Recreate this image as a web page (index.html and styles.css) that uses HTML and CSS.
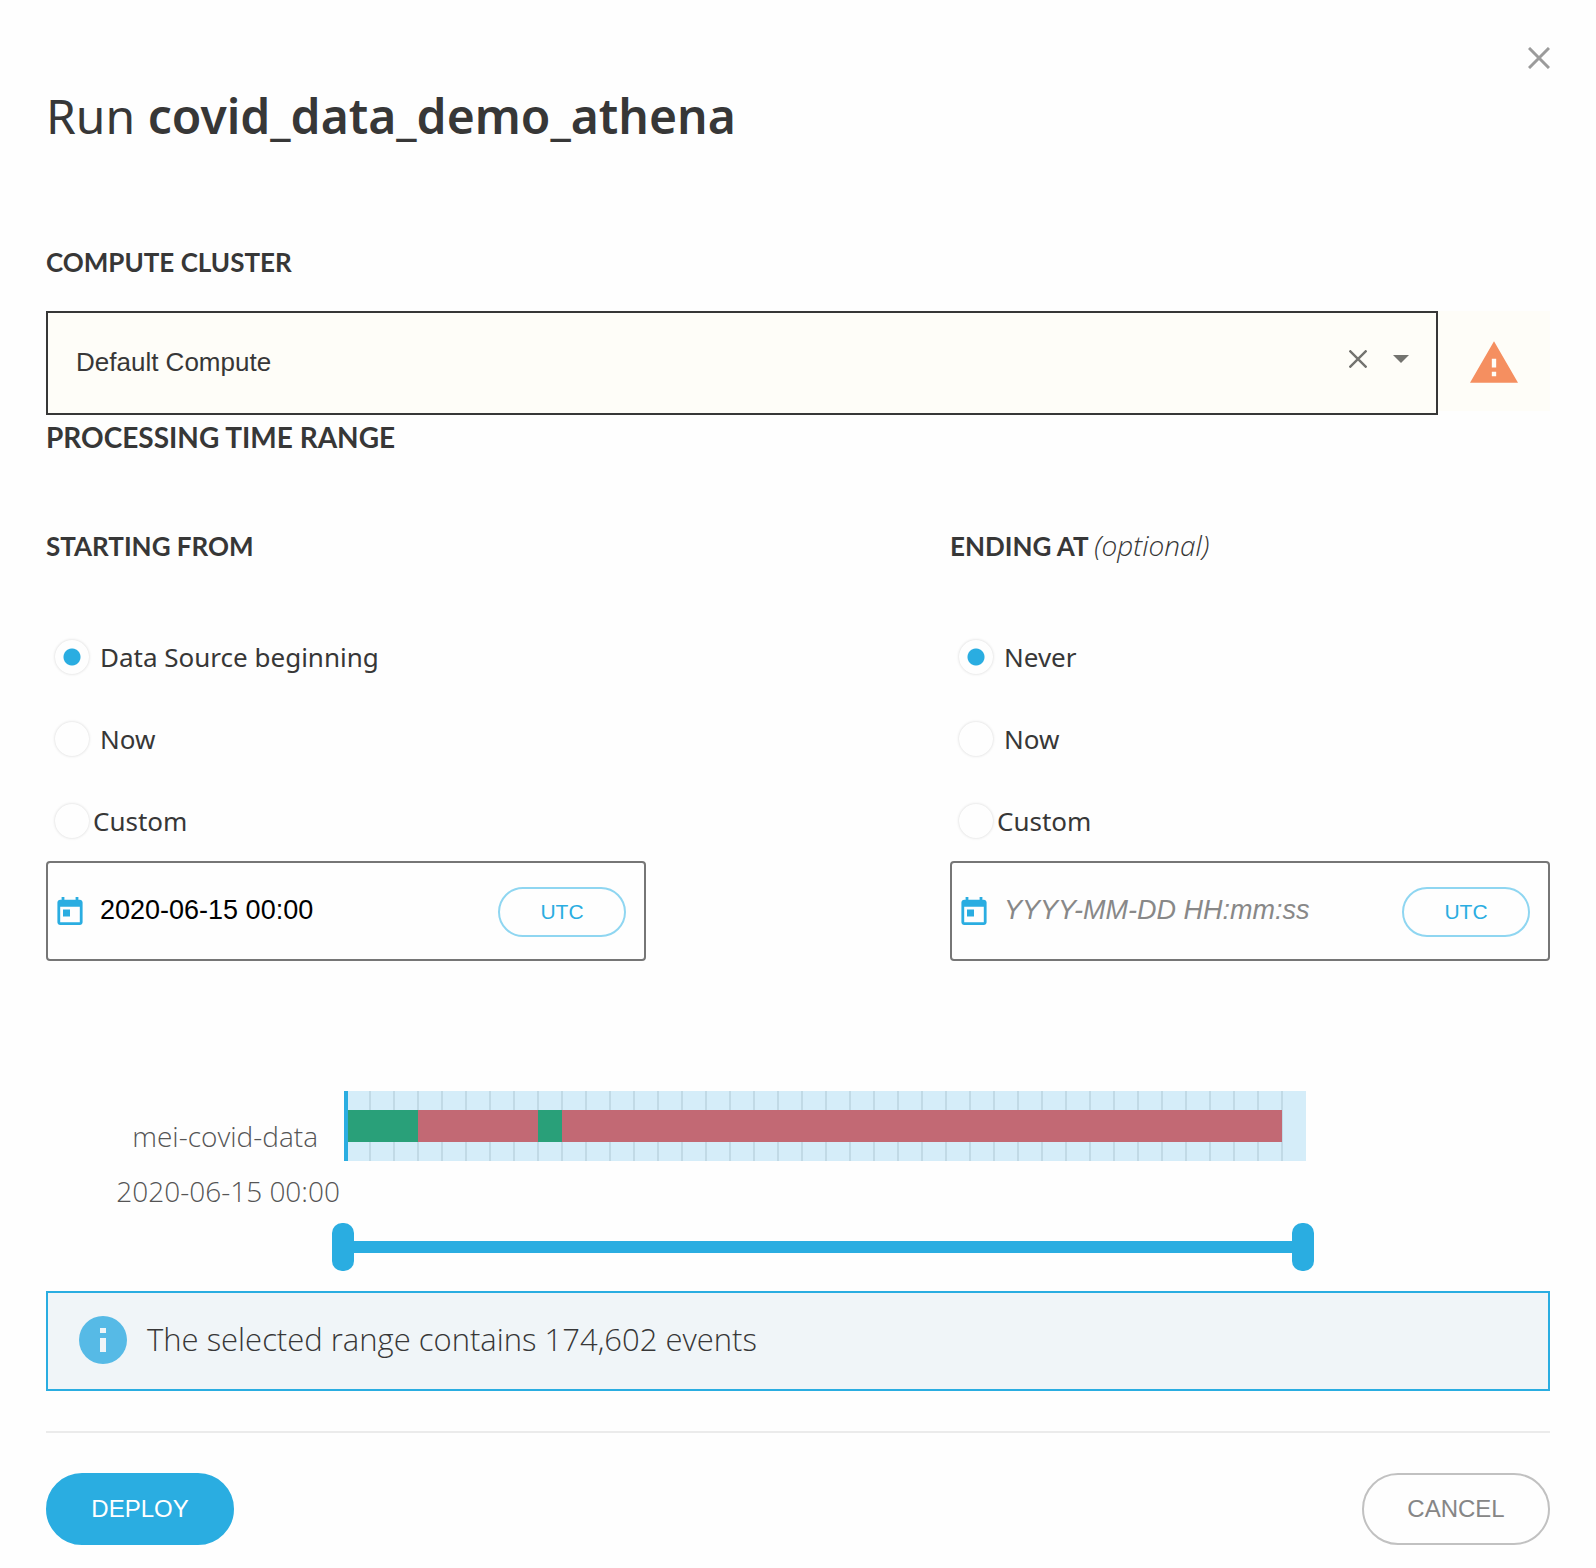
FILE: index.html
```html
<!DOCTYPE html>
<html lang="en">
<head>
<meta charset="utf-8">
<meta name="viewport" content="width=device-width, initial-scale=1">
<title>Run covid_data_demo_athena</title>
<link rel="stylesheet" href="styles.css">
</head>
<body>
<form class="dialog">
  <button class="icon-button close" type="button" aria-label="Close">
    <svg width="22" height="22" viewBox="0 0 22 22" fill="none" stroke="currentColor" stroke-width="3"><path d="M1 1l20 20M21 1L1 21"/></svg>
  </button>
  <h1 class="title">Run <strong>covid_data_demo_athena</strong></h1>

  <label class="label" for="cluster">COMPUTE CLUSTER</label>
  <div class="cluster">
    <div class="cluster-box">
      <select class="cluster-select" id="cluster"><option>Default Compute</option></select>
      <div class="cluster-icons">
        <button class="icon-button" type="button" aria-label="Clear">
          <svg width="18" height="18" viewBox="0 0 18 18" fill="none" stroke="currentColor" stroke-width="2.4"><path d="M.5.5l17 17M17.500.5L.5 17.500"/></svg>
        </button>
        <svg width="16" height="8" viewBox="0 0 16 8" fill="currentColor" aria-hidden="true"><path d="M0 0h16L8 8z"/></svg>
      </div>
    </div>
    <div class="cluster-warning">
      <svg width="48" height="42" viewBox="1 2 22 19" fill="#f58f60" role="img" aria-label="Warning"><path d="M1 21h22L12 2zm12-3h-2v-2h2zm0-4h-2v-4h2z"/></svg>
    </div>
  </div>

  <h2 class="section-title">PROCESSING TIME RANGE</h2>
  <div class="range">
    <section class="range-side">
      <h3 class="label">STARTING FROM</h3>
      <div class="options">
        <label class="option"><input class="radio" type="radio" name="start" checked>Data Source beginning</label>
        <label class="option"><input class="radio" type="radio" name="start">Now</label>
        <label class="option option-custom"><input class="radio" type="radio" name="start">Custom</label>
      </div>
      <div class="date-box">
        <svg class="date-icon" width="26" height="28" viewBox="3 1 18 20" fill="currentColor" aria-hidden="true"><path d="M19 3h-1V1h-2v2H8V1H6v2H5c-1.110 0-2 .9-2 2v14c0 1.100.890 2 2 2h14c1.100 0 2-.9 2-2V5c0-1.100-.9-2-2-2zm0 16H5V8h14zM7 10h5v5H7z"/></svg>
        <input class="date-input" type="text" aria-label="Starting from date" value="2020-06-15 00:00">
        <button class="utc" type="button">UTC</button>
      </div>
    </section>
    <section class="range-side">
      <h3 class="label">ENDING AT <em class="optional">(optional)</em></h3>
      <div class="options">
        <label class="option"><input class="radio" type="radio" name="end" checked>Never</label>
        <label class="option"><input class="radio" type="radio" name="end">Now</label>
        <label class="option option-custom"><input class="radio" type="radio" name="end">Custom</label>
      </div>
      <div class="date-box">
        <svg class="date-icon" width="26" height="28" viewBox="3 1 18 20" fill="currentColor" aria-hidden="true"><path d="M19 3h-1V1h-2v2H8V1H6v2H5c-1.110 0-2 .9-2 2v14c0 1.100.890 2 2 2h14c1.100 0 2-.9 2-2V5c0-1.100-.9-2-2-2zm0 16H5V8h14zM7 10h5v5H7z"/></svg>
        <input class="date-input" type="text" aria-label="Ending at date" placeholder="YYYY-MM-DD HH:mm:ss">
        <button class="utc" type="button">UTC</button>
      </div>
    </section>
  </div>

  <div class="timeline">
    <div class="source">mei-covid-data</div>
    <div class="plot">
      <div class="bar">
        <span class="ok" style="flex-grow:3"></span>
        <span class="missing" style="flex-grow:5"></span>
        <span class="ok" style="flex-grow:1"></span>
        <span class="missing" style="flex-grow:30"></span>
        <span style="flex-grow:1"></span>
      </div>
    </div>
    <div class="from">2020-06-15 00:00</div>
    <div class="slider">
      <input class="handle" type="range" min="0" max="40" value="0" aria-label="Range start">
      <input class="handle" type="range" min="0" max="40" value="40" aria-label="Range end">
    </div>
  </div>

  <div class="info">
    <svg width="48" height="48" viewBox="0 0 48 48" aria-hidden="true"><circle cx="24" cy="24" r="24" fill="#56bae6"/><path d="M21 12h6v5h-6zM21 22h6v14h-6z" fill="#f0f5f8"/></svg>
    <p class="info-text">The selected range contains 174,602 events</p>
  </div>

  <footer class="actions">
    <button class="action deploy" type="submit">DEPLOY</button>
    <button class="action cancel" type="button">CANCEL</button>
  </footer>
</form>
</body>
</html>
```
FILE: styles.css
```css
* { box-sizing: border-box; }

body {
  margin: 0;
  background: #fefefe;
  color: #373737;
  font: 26px/32px "Noto Sans", "Open Sans", sans-serif;
}

h1, h2, h3, p { margin: 0; }
svg { display: block; flex: none; }
button, input, select { font-family: "Liberation Sans", Arial, sans-serif; }

.dialog {
  display: flex;
  flex-direction: column;
  padding: 47px 46px 23px;
}

.icon-button {
  padding: 0;
  border: 0;
  background: none;
  color: inherit;
  cursor: pointer;
}

.close { align-self: flex-end; color: #9b9b9b; }

.title {
  margin-top: 17px;
  margin-bottom: 100px;
  font-size: 48px;
  line-height: 60px;
  font-weight: 400;
}
.title strong { font-weight: 600; }

.label { font: 700 26px/32px Lato, "Open Sans", sans-serif; }
.optional { font: italic 300 28px/24px "Open Sans", sans-serif; }

.cluster { display: flex; align-items: flex-start; margin-top: 33px; }
.cluster-box {
  flex: 1;
  display: flex;
  height: 104px;
  border: 2px solid #373737;
  background: #fefdf8;
}
.cluster-select {
  flex: 1;
  appearance: none;
  padding: 0 28px 2px;
  border: 0;
  background: none;
  color: #373737;
  font-size: 26px;
}
.cluster-icons {
  display: flex;
  align-items: center;
  gap: 26px;
  padding: 0 27px 8px 0;
  color: #73736f;
}
.cluster-warning {
  display: flex;
  justify-content: center;
  align-items: center;
  width: 112px;
  height: 100px;
  padding-top: 2px;
  background: #fefdf8;
}

.section-title { margin-top: 6px; font: 700 28px/32px Lato, "Open Sans", sans-serif; }

.range {
  display: grid;
  grid-template-columns: 1fr 1fr;
  gap: 304px;
  margin-top: 77px;
}

.options {
  display: flex;
  flex-direction: column;
  align-items: flex-start;
  gap: 48px;
  margin: 78px 0 23px;
}
.option { display: flex; align-items: center; gap: 11px; height: 34px; padding-left: 9px; }
.option-custom { gap: 4px; }
.radio {
  appearance: none;
  width: 34px;
  height: 34px;
  margin: 0;
  border-radius: 50%;
  box-shadow: 0 0 3px #d4d4d4;
}
.radio:checked { background: radial-gradient(circle, #2aade1 8px, transparent 9px); }

.date-box {
  display: flex;
  align-items: center;
  height: 100px;
  padding: 2px 18px 0 9px;
  border: 2px solid #767676;
  border-radius: 4px;
}
.date-icon { margin-bottom: 2px; color: #2aade1; }
.date-input {
  flex: 1;
  min-width: 0;
  height: 60px;
  padding: 0 0 4px 17px;
  border: 0;
  outline: 0;
  background: none;
  color: #000;
  font-size: 27px;
}
.date-input::placeholder { color: #888; font-style: italic; opacity: 1; }
.utc {
  width: 128px;
  height: 50px;
  border: 2px solid #8fd6f1;
  border-radius: 25px;
  background: none;
  color: #2aade1;
  font-size: 21px;
}

.timeline {
  display: grid;
  grid-template-columns: 298px 1fr 244px;
  margin-top: 130px;
  color: #555;
  font: 300 28px/32px "Open Sans", sans-serif;
}
.source { align-self: end; padding: 0 26px 9px 0; text-align: right; }
.plot {
  position: relative;
  height: 70px;
  padding: 19px 0 19px 1px;
  border-right: 1px solid #d5edf9;
  background: linear-gradient(90deg, #c1dae6 2px, transparent 2px) 0 -19px / 2.5% 200% content-box border-box #d5edf9;
}
.plot::before {
  content: "";
  position: absolute;
  top: 0;
  bottom: 0;
  left: 0;
  width: 4px;
  background: #2aade1;
}
.bar { display: flex; height: 32px; margin: 0 -1px 0 1px; }
.ok { background: #29a079; }
.missing { background: #c26974; }
.from { grid-column: 1; margin-top: 14px; padding-right: 4px; text-align: right; }

.slider {
  position: relative;
  grid-column: 2;
  grid-row: 3;
  height: 48px;
  margin: 16px -8px 0 -12px;
  background: linear-gradient(#2aade1, #2aade1) center / calc(100% - 22px) 12px no-repeat;
}
.handle {
  position: absolute;
  inset: 0;
  appearance: none;
  width: 100%;
  height: 48px;
  margin: 0;
  background: none;
  pointer-events: none;
}
.handle::-webkit-slider-thumb {
  appearance: none;
  width: 22px;
  height: 48px;
  border-radius: 10px;
  background: #2aade1;
  pointer-events: auto;
}

.info {
  display: flex;
  align-items: center;
  gap: 20px;
  height: 100px;
  margin-top: 20px;
  padding: 0 31px 2px;
  border: 2px solid #2aade1;
  background: #f0f5f8;
}
.info-text { padding-bottom: 2px; font: 300 31px/36px "Open Sans", sans-serif; }

.actions {
  display: flex;
  justify-content: space-between;
  margin-top: 40px;
  padding-top: 40px;
  border-top: 2px solid #ebebeb;
}
.action {
  width: 188px;
  height: 72px;
  border: 2px solid #2aade1;
  border-radius: 36px;
  font-size: 24px;
}
.deploy { background: #2aade1; color: #fff; }
.cancel { border-color: #c1c1c1; background: none; color: #868686; }
```
